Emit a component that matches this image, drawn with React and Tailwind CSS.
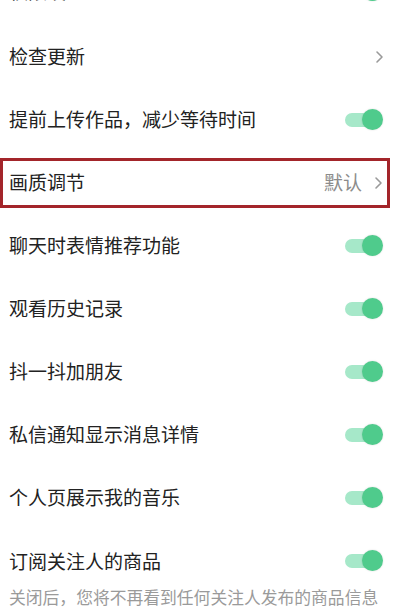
import React from "react";

const font = { fontFamily: '"Noto Sans CJK SC", "Noto Sans", sans-serif' };

function Toggle({ on = true }) {
  return (
    <div className="relative w-[41px] h-[24px] flex items-center">
      <div className={`ml-[2px] w-[32px] h-[14px] rounded-full ${on ? "bg-[#a6e8c9]" : "bg-[#dddddd]"}`} />
      <div
        className={`absolute top-[1px] w-[21px] h-[21px] rounded-full shadow-[0_0_2px_rgba(0,0,0,0.15)] ${
          on ? "right-[1px] bg-[#4fcb8c]" : "left-0 bg-white"
        }`}
      />
    </div>
  );
}

function Chevron() {
  return (
    <svg width="9" height="14" viewBox="0 0 9 14" fill="none">
      <path d="M2 2l5 5-5 5" stroke="#9a9a9a" strokeWidth="1.6" strokeLinecap="round" strokeLinejoin="round" />
    </svg>
  );
}

function Row({ title, className = "h-[63px]", children }) {
  return (
    <div className={`${className} flex items-center justify-between pl-[9px] pr-[16px]`}>
      <span className="text-[19px] text-[#222222]">{title}</span>
      {children}
    </div>
  );
}

const toggles = [
  "聊天时表情推荐功能",
  "观看历史记录",
  "抖一抖加朋友",
  "私信通知显示消息详情",
  "个人页展示我的音乐",
];

export default function App() {
  return (
    <div className="w-[400px] h-[610px] overflow-hidden bg-white" style={font}>
      <div className="mt-[-43px]">
        <Row title="权限设置" className="h-[68px]">
          <Toggle />
        </Row>
        <Row title="检查更新">
          <Chevron />
        </Row>
        <Row title="提前上传作品，减少等待时间">
          <Toggle />
        </Row>

        {/* highlighted row */}
        <div className="h-[63px] flex items-center pr-[10px]">
          <div className="flex-1 h-[50px] border-[3px] border-[#a3252a] flex items-center justify-between pl-[6px] pr-[4px]">
            <span className="text-[19px] text-[#222222]">画质调节</span>
            <div className="flex items-center gap-[12px]">
              <span className="text-[19px] text-[#8c8c8c]">默认</span>
              <Chevron />
            </div>
          </div>
        </div>

        {toggles.map((t) => (
          <Row key={t} title={t}>
            <Toggle />
          </Row>
        ))}

        <div className="pl-[9px] pr-[16px] pt-[18px]">
          <div className="flex items-center justify-between">
            <span className="text-[19px] text-[#222222]">订阅关注人的商品</span>
            <Toggle />
          </div>
          <div className="mt-[9px] text-[16.8px] text-[#9a9a9a] whitespace-nowrap">
            关闭后，您将不再看到任何关注人发布的商品信息
          </div>
        </div>
      </div>
    </div>
  );
}
